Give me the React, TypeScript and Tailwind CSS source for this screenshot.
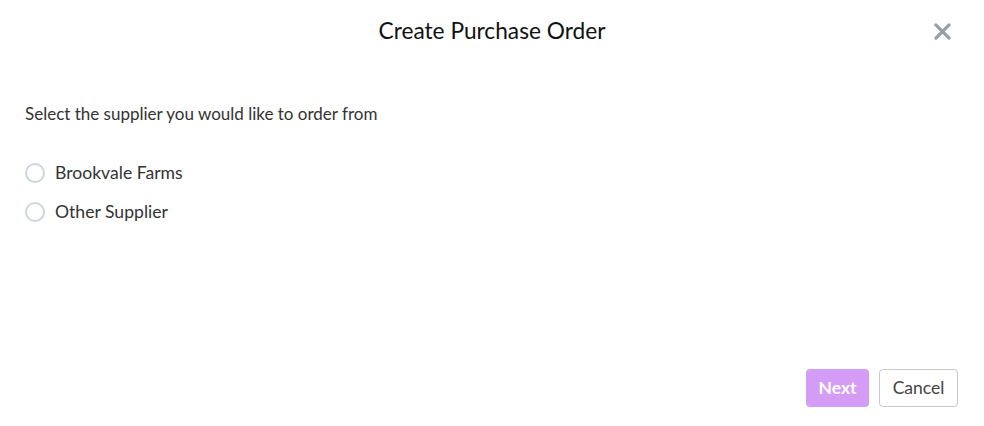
import React from "react";

export default function App() {
  const options = ["Brookvale Farms", "Other Supplier"];
  return (
    <div
      className="flex h-[426px] w-[984px] flex-col bg-white text-[#333]"
      style={{ fontFamily: "Lato, 'Liberation Sans', sans-serif" }}
    >
      <div className="relative flex h-[62px] items-center justify-center">
        <h1 className="text-[22.7px] font-normal text-[#111]">Create Purchase Order</h1>
        <button className="absolute right-[32px] top-[22px] flex h-[19px] w-[19px] items-center justify-center">
          <svg viewBox="0 0 20 20" width="19" height="19">
            <path d="M3 3 L17 17 M17 3 L3 17" stroke="#9a9ea6" strokeWidth="3.4" strokeLinecap="round" />
          </svg>
        </button>
      </div>
      <div className="flex flex-1 flex-col px-[25px]">
        <p className="mt-[40px] text-[17px] leading-[24px] text-[#333]">
          Select the supplier you would like to order from
        </p>
        <div className="mt-[37px] flex flex-col gap-[19px]">
          {options.map((o) => (
            <label key={o} className="flex h-[20px] items-center gap-[10px]">
              <span className="h-[20px] w-[20px] rounded-full border-2 border-[#cdd5dd] bg-white" />
              <span className="text-[17.6px] leading-[20px] text-[#333]">{o}</span>
            </label>
          ))}
        </div>
      </div>
      <div className="flex justify-end gap-[10px] px-[26px] pb-[19px]">
        <button className="h-[38px] w-[63px] rounded-[4px] bg-[#d59cf5] text-[17.5px] font-bold text-white">
          Next
        </button>
        <button className="h-[38px] w-[79px] rounded-[4px] border border-[#c8c8c8] bg-white text-[17.5px] text-[#444]">
          Cancel
        </button>
      </div>
    </div>
  );
}
